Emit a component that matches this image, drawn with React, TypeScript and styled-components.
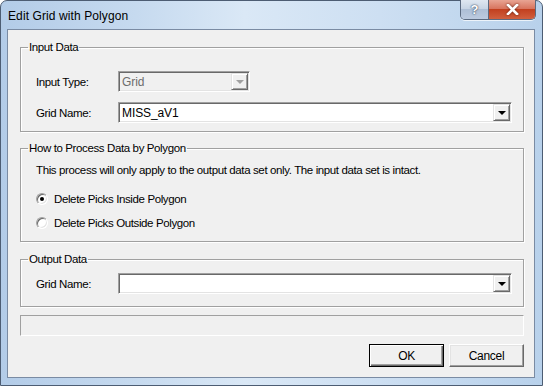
import React from "react";
import styled, { createGlobalStyle } from "styled-components";

const GlobalStyle = createGlobalStyle`
  html, body { margin: 0; padding: 0; background: #ffffff; }
  body { width: 543px; height: 386px; overflow: hidden; }
`;

const uiFont = `"Liberation Sans", Arial, sans-serif`;

function EditGridDialog() {
  // title bar with help and close buttons
  const displayTitleBar = () => {
    return (
      <TitleBar>
        <Caption>Edit Grid with Polygon</Caption>
        <CaptionButtons>
          <HelpButton>?</HelpButton>
          <CloseButton>
            <svg width="13" height="11" viewBox="0 0 13 11">
              <path
                d="M2 1 L11 10 M11 1 L2 10"
                stroke="#ffffff"
                strokeWidth="2.6"
                strokeLinecap="square"
              />
            </svg>
          </CloseButton>
        </CaptionButtons>
      </TitleBar>
    );
  };

  // combo box with drop arrow
  const displayCombo = (value: string, width: number | string, disabled?: boolean) => {
    return (
      <Combo $disabled={disabled} style={{ width }}>
        <ComboText $disabled={disabled}>{value}</ComboText>
        <DropButton>
          <Arrow $disabled={disabled} />
        </DropButton>
      </Combo>
    );
  };

  /* ********** Main return statement of this component ********** */
  return (
    <Window>
      {displayTitleBar()}
      <Client>
        <Group $height={92}>
          <Legend>Input Data</Legend>
          <FieldRow $top={17}>
            <FieldLabel>Input Type:</FieldLabel>
            {displayCombo("Grid", 132, true)}
          </FieldRow>
          <FieldRow $top={10}>
            <FieldLabel>Grid Name:</FieldLabel>
            {displayCombo("MISS_aV1", 394)}
          </FieldRow>
        </Group>

        <Group $height={101} $gap={9}>
          <Legend>How to Process Data by Polygon</Legend>
          <Note>
            This process will only apply to the output data set only. The input data set is intact.
          </Note>
          <RadioRow $top={17}>
            <Radio $checked />
            <span>Delete Picks Inside Polygon</span>
          </RadioRow>
          <RadioRow $top={12}>
            <Radio />
            <span>Delete Picks Outside Polygon</span>
          </RadioRow>
        </Group>

        <Group $height={55} $gap={10}>
          <Legend>Output Data</Legend>
          <FieldRow $top={7}>
            <FieldLabel>Grid Name:</FieldLabel>
            {displayCombo("", 394)}
          </FieldRow>
        </Group>

        <StatusPanel />

        <ButtonBar>
          <PushButton $default>OK</PushButton>
          <PushButton>Cancel</PushButton>
        </ButtonBar>
      </Client>
    </Window>
  );
}

export default function App() {
  return (
    <>
      <GlobalStyle />
      <EditGridDialog />
    </>
  );
}

const Window = styled.div`
  width: 543px;
  height: 386px;
  box-sizing: border-box;
  border: 1px solid #4d5d73;
  border-radius: 7px 7px 0 0;
  background: linear-gradient(90deg, #b3cce8 0%, #c6daef 25%, #dae8f6 45%, #cddff2 70%, #b8d1eb 100%);
  display: flex;
  flex-direction: column;
  padding: 0 7px 7px 6px;
  font-family: ${uiFont};
`;

const TitleBar = styled.div`
  height: 28px;
  display: flex;
  align-items: flex-start;
  justify-content: space-between;
`;

const Caption = styled.div`
  font-size: 12px;
  color: #000000;
  margin-top: 8px;
  margin-left: 1px;
  letter-spacing: 0.1px;
`;

const CaptionButtons = styled.div`
  display: flex;
  margin-right: -1px;
  margin-top: -1px;
  border: 1px solid #5b6a80;
  border-top: none;
  border-radius: 0 0 5px 5px;
  overflow: hidden;
  box-shadow: 0 1px 0 rgba(255, 255, 255, 0.7);
`;

const HelpButton = styled.div`
  width: 27px;
  height: 19px;
  background: linear-gradient(180deg, #dfe7f1 0%, #c8d5e5 45%, #aebfd6 50%, #bccbe0 100%);
  border-right: 1px solid #5b6a80;
  color: #ffffff;
  font-weight: bold;
  font-size: 13px;
  text-align: center;
  line-height: 19px;
  text-shadow: 0 0 2px #3b4a60, 0 0 1px #3b4a60;
`;

const CloseButton = styled.div`
  width: 46px;
  height: 19px;
  display: flex;
  align-items: center;
  justify-content: center;
  background: linear-gradient(180deg, #e8a493 0%, #d8755f 45%, #c2401f 50%, #d0603f 100%);
  svg {
    filter: drop-shadow(0 0 1px #5a1a0a);
  }
`;

const Client = styled.div`
  flex: 1;
  border: 1px solid #7a8ba3;
  background: #f0f0f0;
  display: flex;
  flex-direction: column;
  padding: 10px 10px 0 12px;
`;

const Group = styled.fieldset<{ $height: number; $gap?: number }>`
  margin: ${(p) => p.$gap || 0}px 0 0 0;
  padding: 0 0 0 15px;
  height: ${(p) => p.$height}px;
  box-sizing: border-box;
  border: 1px solid #a0a0a0;
  box-shadow: inset 1px 1px 0 #ffffff, 1px 1px 0 #ffffff;
  font-size: 11.5px;
  letter-spacing: -0.38px;
  color: #000000;
  display: flex;
  flex-direction: column;
`;

const Legend = styled.legend`
  padding: 0 1px;
  margin-left: -8px;
  line-height: 14px;
`;

const FieldRow = styled.div<{ $top: number }>`
  display: flex;
  align-items: center;
  margin-top: ${(p) => p.$top}px;
`;

const FieldLabel = styled.div`
  width: 82px;
`;

const Combo = styled.div<{ $disabled?: boolean }>`
  height: 21px;
  box-sizing: border-box;
  display: flex;
  align-items: center;
  justify-content: space-between;
  border: 1px solid;
  border-color: #a0a0a0 #ffffff #ffffff #a0a0a0;
  box-shadow: inset 1px 1px 0 #696969, inset -1px -1px 0 #e3e3e3;
  background: ${(p) => (p.$disabled ? "#f0f0f0" : "#ffffff")};
  padding: 1px 1px 1px 2px;
`;

const ComboText = styled.span<{ $disabled?: boolean }>`
  color: ${(p) => (p.$disabled ? "#6d6d6d" : "#000000")};
  padding-left: 1px;
  font-size: 12px;
  letter-spacing: -0.1px;
`;

const DropButton = styled.div`
  width: 17px;
  height: 17px;
  box-sizing: border-box;
  background: #f0f0f0;
  border: 1px solid;
  border-color: #e3e3e3 #696969 #696969 #e3e3e3;
  box-shadow: inset 1px 1px 0 #ffffff, inset -1px -1px 0 #a0a0a0;
  display: flex;
  align-items: center;
  justify-content: center;
`;

const Arrow = styled.div<{ $disabled?: boolean }>`
  width: 0;
  height: 0;
  border-left: 4px solid transparent;
  border-right: 4px solid transparent;
  border-top: 4px solid ${(p) => (p.$disabled ? "#a0a0a0" : "#000000")};
  margin-top: 1px;
`;

const Note = styled.div`
  margin-top: 9px;
`;

const RadioRow = styled.div<{ $top: number }>`
  display: flex;
  align-items: center;
  gap: 6px;
  margin-top: ${(p) => p.$top}px;
`;

const Radio = styled.div<{ $checked?: boolean }>`
  width: 12px;
  height: 12px;
  box-sizing: border-box;
  border-radius: 50%;
  border: 1px solid;
  border-color: #a0a0a0 #ffffff #ffffff #a0a0a0;
  background: #ffffff;
  box-shadow: inset 1px 1px 0 #696969, inset -1px -1px 0 #e3e3e3;
  display: flex;
  align-items: center;
  justify-content: center;
  &::after {
    content: "";
    width: 4px;
    height: 4px;
    border-radius: 50%;
    background: ${(p) => (p.$checked ? "#000000" : "transparent")};
  }
`;

const StatusPanel = styled.div`
  height: 21px;
  margin-top: 8px;
  box-sizing: border-box;
  border: 1px solid;
  border-color: #a0a0a0 #ffffff #ffffff #a0a0a0;
  background: #f0f0f0;
`;

const ButtonBar = styled.div`
  display: flex;
  justify-content: flex-end;
  gap: 5px;
  margin-top: 8px;
`;

const PushButton = styled.div<{ $default?: boolean }>`
  width: 75px;
  height: 23px;
  box-sizing: border-box;
  display: flex;
  align-items: center;
  justify-content: center;
  font-size: 12px;
  letter-spacing: -0.3px;
  background: #f0f0f0;
  border: 1px solid;
  border-color: ${(p) => (p.$default ? "#000000" : "#ffffff #696969 #696969 #ffffff")};
  box-shadow: ${(p) =>
    p.$default
      ? "inset 1px 1px 0 #ffffff, inset -1px -1px 0 #696969, inset -2px -2px 0 #a0a0a0"
      : "inset -1px -1px 0 #a0a0a0, inset 1px 1px 0 #e3e3e3"};
`;
